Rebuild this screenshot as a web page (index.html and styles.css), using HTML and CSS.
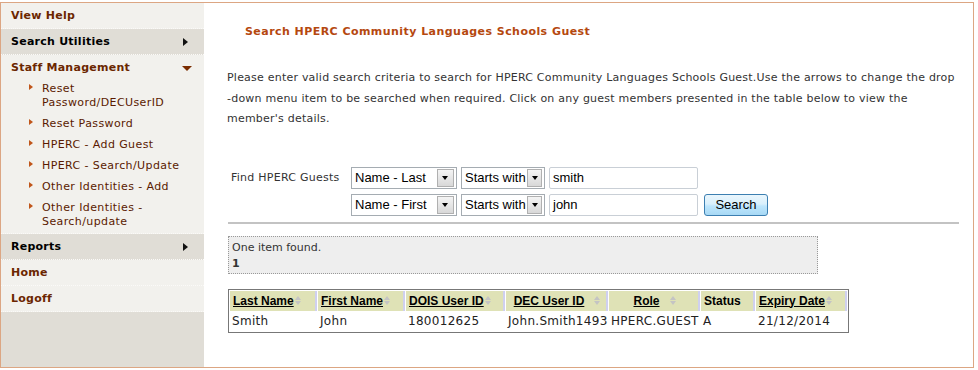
FILE: index.html
```html
<!doctype html>
<html lang="en">
<head>
    <meta charset="UTF-8">
    <title>Search HPERC Community Languages Schools Guest</title>
    <link rel="stylesheet" href="styles.css">
</head>
<body>
<div id="page">
    <div class="sideNav">
        <ul class="menu">
            <li class="item light"><a href="#">View Help</a></li>
            <li class="item dark"><a href="#">Search Utilities<span class="arrowRight"></span></a></li>
            <li class="item light open">
                <a href="#">Staff Management<span class="arrowDown"></span></a>
                <ul class="sub">
                    <li><a href="#">Reset<br>Password/DECUserID</a></li>
                    <li><a href="#">Reset Password</a></li>
                    <li><a href="#">HPERC - Add Guest</a></li>
                    <li><a href="#">HPERC - Search/Update</a></li>
                    <li><a href="#">Other Identities - Add</a></li>
                    <li><a href="#">Other Identities -<br>Search/update</a></li>
                </ul>
            </li>
            <li class="item dark"><a href="#">Reports<span class="arrowRight"></span></a></li>
            <li class="item light"><a href="#">Home</a></li>
            <li class="item light"><a href="#">Logoff</a></li>
        </ul>
    </div>
    <div class="main">
        <h1 class="title">Search HPERC Community Languages Schools Guest</h1>
        <p class="intro">Please enter valid search criteria to search for HPERC Community Languages Schools Guest.Use the arrows to change the drop -down menu item to be searched when required. Click on any guest members presented in the table below to view the member's details.</p>

        <div class="searchForm">
            <label class="findLabel">Find HPERC Guests</label>
            <div class="row">
                <span class="combo field"><em>Name - Last</em><i></i></span>
                <span class="combo op"><em>Starts with</em><i></i></span>
                <span class="textBox">smith</span>
            </div>
            <div class="row rowTwo">
                <span class="combo field"><em>Name - First</em><i></i></span>
                <span class="combo op"><em>Starts with</em><i></i></span>
                <span class="textBox">john</span>
                <button class="btnSearch" type="button">Search</button>
            </div>
        </div>
        <div class="rule"></div>

        <div class="result">
            <div>One item found.</div>
            <div class="pages">1</div>
        </div>

        <table class="grid">
            <thead>
            <tr>
                <th class="cLast"><a href="#">Last Name</a><span class="sort"></span></th>
                <th class="cFirst"><a href="#">First Name</a><span class="sort"></span></th>
                <th class="cDois"><a href="#">DOIS User ID</a><span class="sort"></span></th>
                <th class="cDec center"><a href="#">DEC User ID</a><span class="sort gap"></span></th>
                <th class="cRole center"><a href="#">Role</a><span class="sort gap"></span></th>
                <th class="cStatus">Status</th>
                <th class="cExpiry"><a href="#">Expiry Date</a><span class="sort"></span></th>
            </tr>
            </thead>
            <tbody>
            <tr>
                <td>Smith</td>
                <td>John</td>
                <td>180012625</td>
                <td>John.Smith1493</td>
                <td>HPERC.GUEST</td>
                <td>A</td>
                <td>21/12/2014</td>
            </tr>
            </tbody>
        </table>
    </div>
</div>
</body>
</html>
```

FILE: styles.css
```css
* {
    margin: 0;
    padding: 0;
}

body {
    background: #fff;
    font-family: "DejaVu Sans", Verdana, sans-serif;
    font-size: 11px;
    color: #333;
}

#page {
    display: flex;
    width: 972px;
    height: 364px;
    margin-top: 2px;
    border: 1px solid #dca683;
}

/* left menu */
.sideNav {
    width: 203px;
    background: #e0ddd6;
}

.menu, .sub {
    list-style: none;
}

.menu a {
    text-decoration: none;
}

.item {
    border-bottom: 1px dotted #fbfaf8;
}

.item > a {
    position: relative;
    display: block;
    height: 25px;
    line-height: 25px;
    padding-left: 10px;
    font-weight: bold;
    letter-spacing: 0.25px;
    color: #6b2600;
}

.item.light {
    background: #f2f1ed;
}

.item.dark > a {
    color: #000;
}

.arrowRight {
    position: absolute;
    left: 182px;
    top: 9px;
    border-style: solid;
    border-width: 4px 0 4px 5px;
    border-color: transparent transparent transparent #111;
}

.arrowDown {
    position: absolute;
    left: 181px;
    top: 11px;
    border-style: solid;
    border-width: 5px 5px 0;
    border-color: #7a2c00 transparent transparent;
}

.sub {
    padding: 2px 0 4px;
}

.sub li {
    position: relative;
    padding-left: 41px;
    margin-bottom: 7px;
    line-height: 14px;
    letter-spacing: 0.4px;
}

.sub li:last-child {
    margin-bottom: 0;
}

.sub li:before {
    content: "";
    position: absolute;
    left: 28px;
    top: 2px;
    border-style: solid;
    border-width: 3px 0 3px 4px;
    border-color: transparent transparent transparent #c0561a;
}

.sub a {
    color: #5a1a00;
}

/* content */
.main {
    flex: 1;
    padding: 0 14px 0 23px;
}

.title {
    font-size: 11px;
    letter-spacing: 0.45px;
    color: #b5480f;
    margin: 20px 0 0 18px;
    line-height: 18px;
}

.intro {
    margin-top: 27px;
    line-height: 20.5px;
    letter-spacing: 0.22px;
    color: #333;
}

.searchForm {
    display: grid;
    grid-template-columns: 120px auto;
    row-gap: 5px;
    margin-top: 37px;
    padding-left: 4px;
}

.findLabel {
    line-height: 22px;
    letter-spacing: 0.25px;
    color: #333;
}

.row {
    display: flex;
    gap: 4px;
    font-family: "Liberation Sans", Arial, sans-serif;
    font-size: 13px;
    color: #000;
}

.rowTwo {
    grid-column: 2;
}

.combo {
    display: flex;
    align-items: center;
    height: 22px;
    box-sizing: border-box;
    border: 1px solid #a5acb2;
    background: #fff;
}

.combo em {
    flex: 1;
    font-style: normal;
    padding-left: 3px;
    white-space: nowrap;
}

.combo i {
    position: relative;
    width: 15px;
    height: 16px;
    margin: 0 2px 0 1px;
    border: 1px solid #b0b0b0;
    background: linear-gradient(#f4f4f4, #d8d8d8);
}

.combo i:after {
    content: "";
    position: absolute;
    left: 4px;
    top: 6px;
    border-style: solid;
    border-width: 4px 3px 0;
    border-color: #000 transparent transparent;
}

.field {
    width: 106px;
}

.op {
    width: 84px;
}

.textBox {
    width: 149px;
    height: 22px;
    line-height: 20px;
    box-sizing: border-box;
    padding-left: 3px;
    border: 1px solid #c9cfd6;
    border-radius: 2px;
}

.btnSearch {
    width: 64px;
    height: 22px;
    margin-left: 2px;
    font-family: "Liberation Sans", Arial, sans-serif;
    font-size: 13px;
    color: #000;
    border: 1px solid #3c7fb1;
    border-radius: 3px;
    background: linear-gradient(#eaf6fd 0%, #d9f0fc 45%, #bee6fd 55%, #a7d9f5 100%);
}

.rule {
    height: 2px;
    margin-top: 6px;
    margin-left: 1px;
    background: #c3c3c3;
}

.result {
    width: 582px;
    margin: 12px 0 0 1px;
    padding: 3px 3px 0;
    height: 33px;
    background: #eee;
    border: 1px dotted #999;
    line-height: 16px;
}

.pages {
    font-weight: bold;
}

.grid {
    margin: 15px 0 0 1px;
    border: 1px solid #777;
    border-spacing: 1px 1px;
    font-size: 12px;
    color: #222;
}

.grid th {
    height: 20px;
    padding: 0 0 0 3px;
    text-align: left;
    white-space: nowrap;
    background: #dfe2b6;
    border-right: 2px solid #cfd0ef;
    font-family: "Liberation Sans", Arial, sans-serif;
    font-size: 12px;
    color: #000;
}

.grid th.center {
    text-align: center;
}

.grid th a {
    color: #000;
    text-decoration: underline;
}

.sort {
    display: inline-block;
    position: relative;
    width: 7px;
    height: 10px;
    margin-left: 1px;
    vertical-align: -1px;
}

.sort.gap {
    margin-left: 10px;
}

.sort:before, .sort:after {
    content: "";
    position: absolute;
    left: 0;
    border-style: solid;
    border-color: transparent;
}

.sort:before {
    top: 0;
    border-width: 0 3.5px 4px;
    border-bottom-color: #c4c4c4;
}

.sort:after {
    top: 5px;
    border-width: 4px 3.5px 0;
    border-top-color: #c4c4c4;
}

.grid td {
    height: 19px;
    padding: 0 0 0 2px;
    white-space: nowrap;
    letter-spacing: 0.3px;
}

.cLast { width: 82px; }
.cFirst { width: 82px; }
.cDois { width: 94px; }
.cDec { width: 97px; }
.cRole { width: 86px; }
.cStatus { width: 49px; }
.cExpiry { width: 86px; }
```
